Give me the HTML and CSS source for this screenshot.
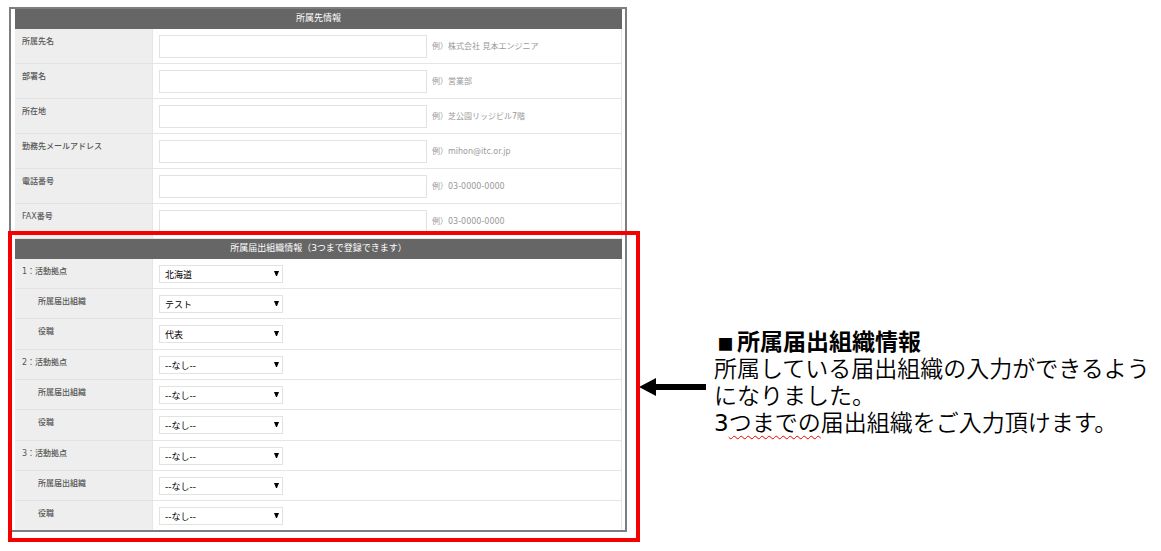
FILE: index.html
```html
<!DOCTYPE html>
<html lang="ja">
<head>
    <meta charset="UTF-8">
    <meta name="viewport" content="width=device-width, initial-scale=1.0">
    <title>所属届出組織情報</title>
    <link rel="stylesheet" href="styles.css">
</head>
<body>
    <main class="guide">
        <form class="screen">
            <table class="form-table">
                <colgroup><col class="col-label"><col></colgroup>
                <thead>
                    <tr><th colspan="2">所属先情報</th></tr>
                </thead>
                <tbody>
                    <tr>
                        <th><label for="company">所属先名</label></th>
                        <td><div class="field"><input type="text" id="company"><span class="hint">例）株式会社 見本エンジニア</span></div></td>
                    </tr>
                    <tr>
                        <th><label for="department">部署名</label></th>
                        <td><div class="field"><input type="text" id="department"><span class="hint">例）営業部</span></div></td>
                    </tr>
                    <tr>
                        <th><label for="address">所在地</label></th>
                        <td><div class="field"><input type="text" id="address"><span class="hint">例）芝公園リッジビル7階</span></div></td>
                    </tr>
                    <tr>
                        <th><label for="email">勤務先メールアドレス</label></th>
                        <td><div class="field"><input type="email" id="email"><span class="hint">例）mihon@itc.or.jp</span></div></td>
                    </tr>
                    <tr>
                        <th><label for="tel">電話番号</label></th>
                        <td><div class="field"><input type="tel" id="tel"><span class="hint">例）03-0000-0000</span></div></td>
                    </tr>
                    <tr>
                        <th><label for="fax">FAX番号</label></th>
                        <td><div class="field"><input type="tel" id="fax"><span class="hint">例）03-0000-0000</span></div></td>
                    </tr>
                </tbody>
            </table>

            <div class="highlight">
                <table class="form-table">
                    <colgroup><col class="col-label"><col></colgroup>
                    <thead>
                        <tr><th colspan="2">所属届出組織情報（3つまで登録できます）</th></tr>
                    </thead>
                    <tbody class="org">
                        <tr>
                            <th><label for="area1">1：活動拠点</label></th>
                            <td><div class="select"><select id="area1"><option>北海道</option></select></div></td>
                        </tr>
                        <tr>
                            <th class="sub"><label for="org1">所属届出組織</label></th>
                            <td><div class="select"><select id="org1"><option>テスト</option></select></div></td>
                        </tr>
                        <tr>
                            <th class="sub"><label for="post1">役職</label></th>
                            <td><div class="select"><select id="post1"><option>代表</option></select></div></td>
                        </tr>
                    </tbody>
                    <tbody class="org">
                        <tr>
                            <th><label for="area2">2：活動拠点</label></th>
                            <td><div class="select"><select id="area2"><option>--なし--</option></select></div></td>
                        </tr>
                        <tr>
                            <th class="sub"><label for="org2">所属届出組織</label></th>
                            <td><div class="select"><select id="org2"><option>--なし--</option></select></div></td>
                        </tr>
                        <tr>
                            <th class="sub"><label for="post2">役職</label></th>
                            <td><div class="select"><select id="post2"><option>--なし--</option></select></div></td>
                        </tr>
                    </tbody>
                    <tbody class="org">
                        <tr>
                            <th><label for="area3">3：活動拠点</label></th>
                            <td><div class="select"><select id="area3"><option>--なし--</option></select></div></td>
                        </tr>
                        <tr>
                            <th class="sub"><label for="org3">所属届出組織</label></th>
                            <td><div class="select"><select id="org3"><option>--なし--</option></select></div></td>
                        </tr>
                        <tr>
                            <th class="sub"><label for="post3">役職</label></th>
                            <td><div class="select"><select id="post3"><option>--なし--</option></select></div></td>
                        </tr>
                    </tbody>
                </table>
            </div>
        </form>

        <svg class="arrow" width="67" height="18" viewBox="0 0 67 18" aria-hidden="true">
            <path d="M0 9 L17 0 V6 H67 V12 H17 V18 Z"/>
        </svg>

        <section class="note">
            <h1><span class="mark">■</span>所属届出組織情報</h1>
            <p>所属している届出組織の入力ができるようになりました。</p>
            <p><span class="num">3</span><span class="typo">つまでの</span>届出組織をご入力頂けます。</p>
        </section>
    </main>
</body>
</html>
```
FILE: styles.css
```css
* {
    box-sizing: border-box;
}
body {
    margin: 0;
    padding: 7px 8px 19px;
    background: #fff;
    font-family: "DejaVu Sans", "Noto Sans CJK JP", sans-serif;
}
.guide {
    display: grid;
    grid-template-columns: minmax(0, 631px) 67px minmax(0, 1fr);
    align-items: start;
}

/* form */
.screen {
    max-width: 618px;
    margin-left: 1px;
    padding: 0 3px 0 4px;
    border: 2px solid #7c7f82;
}
.form-table {
    width: 100%;
    table-layout: fixed;
    border-collapse: separate;
    border-spacing: 0;
    font-size: 8px;
    line-height: 12px;
    color: #555;
}
.col-label {
    width: 138px;
}
.form-table thead th {
    height: 20px;
    padding: 0 0 2px;
    background: #666;
    color: #fff;
    font-size: 9px;
    font-weight: normal;
}
.form-table tbody th {
    padding: 7px 7px 0;
    background: #eee;
    border-right: 1px solid #e5e5e5;
    border-bottom: 1px solid #e2e2e2;
    font-weight: 500;
    text-align: left;
    vertical-align: top;
}
.form-table tbody th.sub {
    padding-left: 23px;
}
.form-table td {
    height: 35px;
    padding: 6px 6px 5px;
    border-right: 1px solid #e5e5e5;
    border-bottom: 1px solid #e5e5e5;
    vertical-align: top;
}
.form-table label {
    display: block;
}
.field {
    display: flex;
    align-items: center;
    gap: 5px;
}
.field input {
    flex: 0 1 268px;
    min-width: 0;
    height: 23px;
    padding: 0 5px;
    border: 1px solid #e2e2e2;
    background: #fff;
    font: inherit;
}
.hint {
    color: #999;
    white-space: nowrap;
}

/* organization selects */
.highlight {
    position: relative;
}
.highlight::after {
    content: "";
    position: absolute;
    inset: -8px -18px -12px -7px;
    border: 4px solid #f40000;
    pointer-events: none;
}
.form-table .org td {
    height: 30px;
}
.form-table .org tr:last-child td {
    height: 31px;
}
.form-table .org:last-child tr:last-child td {
    height: 29px;
}
.form-table .org:last-child tr:last-child > * {
    border-bottom: 0;
}
.select {
    position: relative;
    max-width: 124px;
}
.select::after {
    content: "";
    position: absolute;
    top: 6px;
    right: 4px;
    width: 1px;
    border: solid transparent;
    border-width: 5px 2px 0;
    border-top-color: #000;
    pointer-events: none;
}
.select select {
    display: block;
    width: 100%;
    height: 18px;
    padding: 2px 5px 0;
    border: 1px solid #e2e2e2;
    border-radius: 0;
    background: #fff;
    color: #000;
    font-family: inherit;
    font-size: 9px;
    appearance: none;
}

/* explanation */
.arrow {
    margin-top: 371px;
}
.note {
    margin-top: 320px;
    padding-left: 8px;
    font-family: "Noto Sans CJK JP", sans-serif;
    font-size: 23px;
    font-weight: 350;
    line-height: 27px;
    color: #000;
}
.note h1 {
    margin: 0;
    font-size: 23px;
    font-weight: bold;
}
.note p {
    margin: 0;
}
.mark {
    display: inline-block;
    width: 23px;
    font-size: 16px;
    line-height: 16px;
    text-align: center;
}
.num {
    font-family: "DejaVu Sans", sans-serif;
    font-weight: normal;
    line-height: 23px;
}
.typo {
    text-decoration: underline wavy #e00 1px;
    text-underline-offset: 4px;
}
```
